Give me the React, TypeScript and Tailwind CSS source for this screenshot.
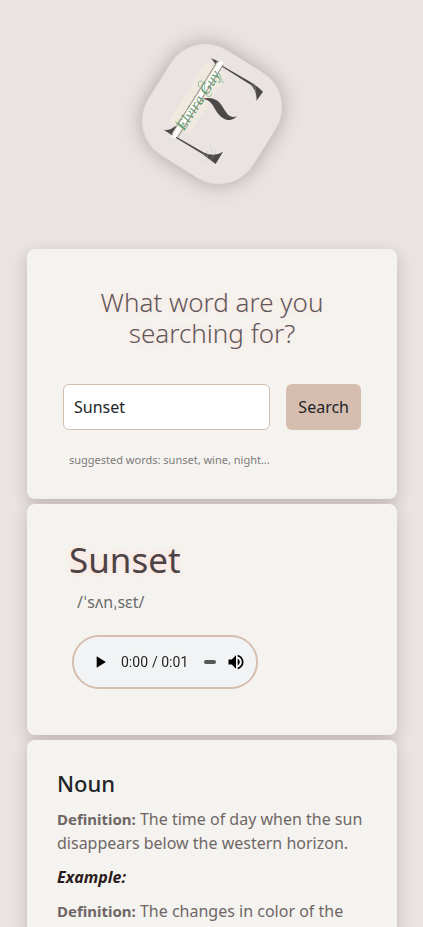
import { useEffect, useState } from "react";
import type { FormEvent, ReactNode } from "react";

const SAMPLE_RATE = 8000;

/** Builds a one second silent clip as a WAV blob. */
function createClip(): Blob {
  const size = SAMPLE_RATE;
  const buffer = new ArrayBuffer(44 + size);
  const view = new DataView(buffer);
  const tag = (offset: number, value: string) => {
    for (let i = 0; i < value.length; i++) view.setUint8(offset + i, value.charCodeAt(i));
  };
  tag(0, "RIFF");
  view.setUint32(4, 36 + size, true);
  tag(8, "WAVE");
  tag(12, "fmt ");
  view.setUint32(16, 16, true);
  view.setUint16(20, 1, true);
  view.setUint16(22, 1, true);
  view.setUint32(24, SAMPLE_RATE, true);
  view.setUint32(28, SAMPLE_RATE, true);
  view.setUint16(32, 1, true);
  view.setUint16(34, 8, true);
  tag(36, "data");
  view.setUint32(40, size, true);
  new Uint8Array(buffer, 44).fill(128);
  return new Blob([buffer], { type: "audio/wav" });
}

function Logo() {
  return (
    <svg
      viewBox="0 0 495 495"
      className="h-[165px] w-[165px] overflow-visible"
      role="img"
      aria-label="Elvira Guy logo"
    >
      <rect
        x="60"
        y="66"
        width="372"
        height="372"
        rx="122"
        transform="rotate(32 246 252)"
        fill="#e9e4e1"
        className="drop-shadow-[0_0_30px_rgba(60,40,40,0.35)]"
      />
      <rect x="-36" y="-108" width="74" height="214" rx="14" transform="translate(202 205) rotate(32)" fill="#f0e9df" />
      <g fill="#4d4848">
        <path d="M243 84 L274 98 L260 114 Q256 98 243 84Z" />
        <path d="M101 299 Q120 303 137 287 L140 318 L126 316Z" />
        <path d="M277 107 L368 160 Q386 172 399 185 L379 213 Q383 190 364 166 L276 110Z" />
        <path d="M139 320 L220 367 Q252 383 279 365 L257 402 L216 371 L138 324Z" />
        <path d="M216 207 Q240 199 260 211 C285 227 287 270 320 259 C302 281 274 267 260 245 C246 222 240 207 216 207Z" />
      </g>
      <path d="M134 317 L271 99" stroke="#8a8580" strokeWidth="23" />
      <path d="M134 317 L271 99" stroke="#ece6df" strokeWidth="18" />
      <path d="M130 323 L276 94" stroke="#fdfdfd" strokeWidth="13" />
      <path
        d="M225 399 q12-20 8-38 m3 31 q22-16 22-35 m-28 20 l-12-8 m30-2 l-6-18 M374 204 q7-18-2-44 m0 28 l-12-10 m13-2 l-10-18"
        fill="none"
        stroke="#b9c0b8"
        strokeWidth="3"
        opacity="0.35"
      />
      <path
        d="M137 274 C150 300 165 294 158 278 M208 172 C196 146 224 148 224 172 C222 196 240 210 246 190 M262 132 C274 122 266 150 282 158"
        fill="none"
        stroke="#5fa873"
        strokeWidth="2"
      />
      <text
        transform="translate(162 304) rotate(-57)"
        fill="#5f9a6e"
        fontSize="46"
        className="font-['Liberation_Serif',serif] italic"
      >
        Elvira Guy
      </text>
    </svg>
  );
}

function Card({ children, className = "" }: { children: ReactNode; className?: string }) {
  return (
    <section
      className={`rounded-lg bg-[#f5f3ef] shadow-[0_5px_15px_rgba(80,40,45,0.24)] ${className}`}
    >
      {children}
    </section>
  );
}

function Definition({ children }: { children: ReactNode }) {
  return (
    <p className="mb-2.5 text-[#6f6766]">
      <strong className="text-[15px] leading-5 font-bold">Definition:</strong> {children}
    </p>
  );
}

export default function App() {
  const [word, setWord] = useState("Sunset");
  const [clip, setClip] = useState<string>();

  useEffect(() => {
    const url = URL.createObjectURL(createClip());
    setClip(url);
    return () => URL.revokeObjectURL(url);
  }, []);

  const search = (event: FormEvent) => event.preventDefault();

  return (
    <div className="min-h-screen bg-[#e9e4e1] pr-[26px] pb-10 pl-[27px] font-['Noto_Sans',sans-serif] text-base text-[#212529]">
      <header className="flex justify-center pt-[30px] pb-[54px]">
        <Logo />
      </header>
      <main className="mx-auto flex max-w-[720px] flex-col gap-[5px]">
        <Card className="px-9 pt-[38px] pb-[31px]">
          <h2 className="text-center text-[26px] leading-[31px] font-light text-[#5f575b] [text-shadow:0_0_8px_#ffe4dc,0_0_8px_#ffe4dc]">
            What word are you
            <br />
            searching for?
          </h2>
          <form onSubmit={search} className="mt-[35px] flex gap-4">
            <input
              type="search"
              aria-label="Word"
              value={word}
              onChange={(event) => setWord(event.target.value)}
              className="h-[46px] min-w-0 flex-1 rounded-md border border-[#d5bdaf] bg-white px-2.5 outline-none"
            />
            <button type="submit" className="h-[46px] rounded-md bg-[#d5bdaf] px-3">
              Search
            </button>
          </form>
          <p className="mt-[22px] pl-1.5 text-[11px] leading-4 text-[#807a79]">
            suggested words: sunset, wine, night...
          </p>
        </Card>

        <Card className="px-[42px] pt-[34px] pb-[46px] shadow-[0_5px_15px_rgba(80,40,45,0.24),inset_0_12px_12px_-12px_rgba(0,0,0,0.1)]">
          <h1 className="text-[35px] leading-[44px] text-[#4d4246] [text-shadow:0_0_8px_#ffe4dc,0_0_8px_#ffe4dc]">
            Sunset
          </h1>
          <p className="mt-2 pl-2 leading-6 text-[#6c6c6c]">
            /<span className="font-['DejaVu_Sans',sans-serif]">ˈ</span>sʌn
            <span className="font-['DejaVu_Sans',sans-serif]">ˌ</span>sɛt/
          </p>
          <audio
            controls
            src={clip}
            className="mt-5 ml-[3px] h-[54px] w-[186px] rounded-full border-2 border-[#d5bdaf] bg-[#f1f3f4]"
          />
        </Card>

        <Card className="px-[30px] pt-7 pb-8 shadow-[0_5px_15px_rgba(80,40,45,0.24),inset_0_12px_12px_-12px_rgba(0,0,0,0.1)]">
          <h3 className="mb-[9px] text-[22px] leading-[30px] font-medium">Noun</h3>
          <Definition>The time of day when the sun disappears below the western horizon.</Definition>
          <p className="mb-2.5 font-bold text-[#2b1c1c] italic">Example:</p>
          <Definition>The changes in color of the sky at sunset.</Definition>
        </Card>
      </main>
    </div>
  );
}
